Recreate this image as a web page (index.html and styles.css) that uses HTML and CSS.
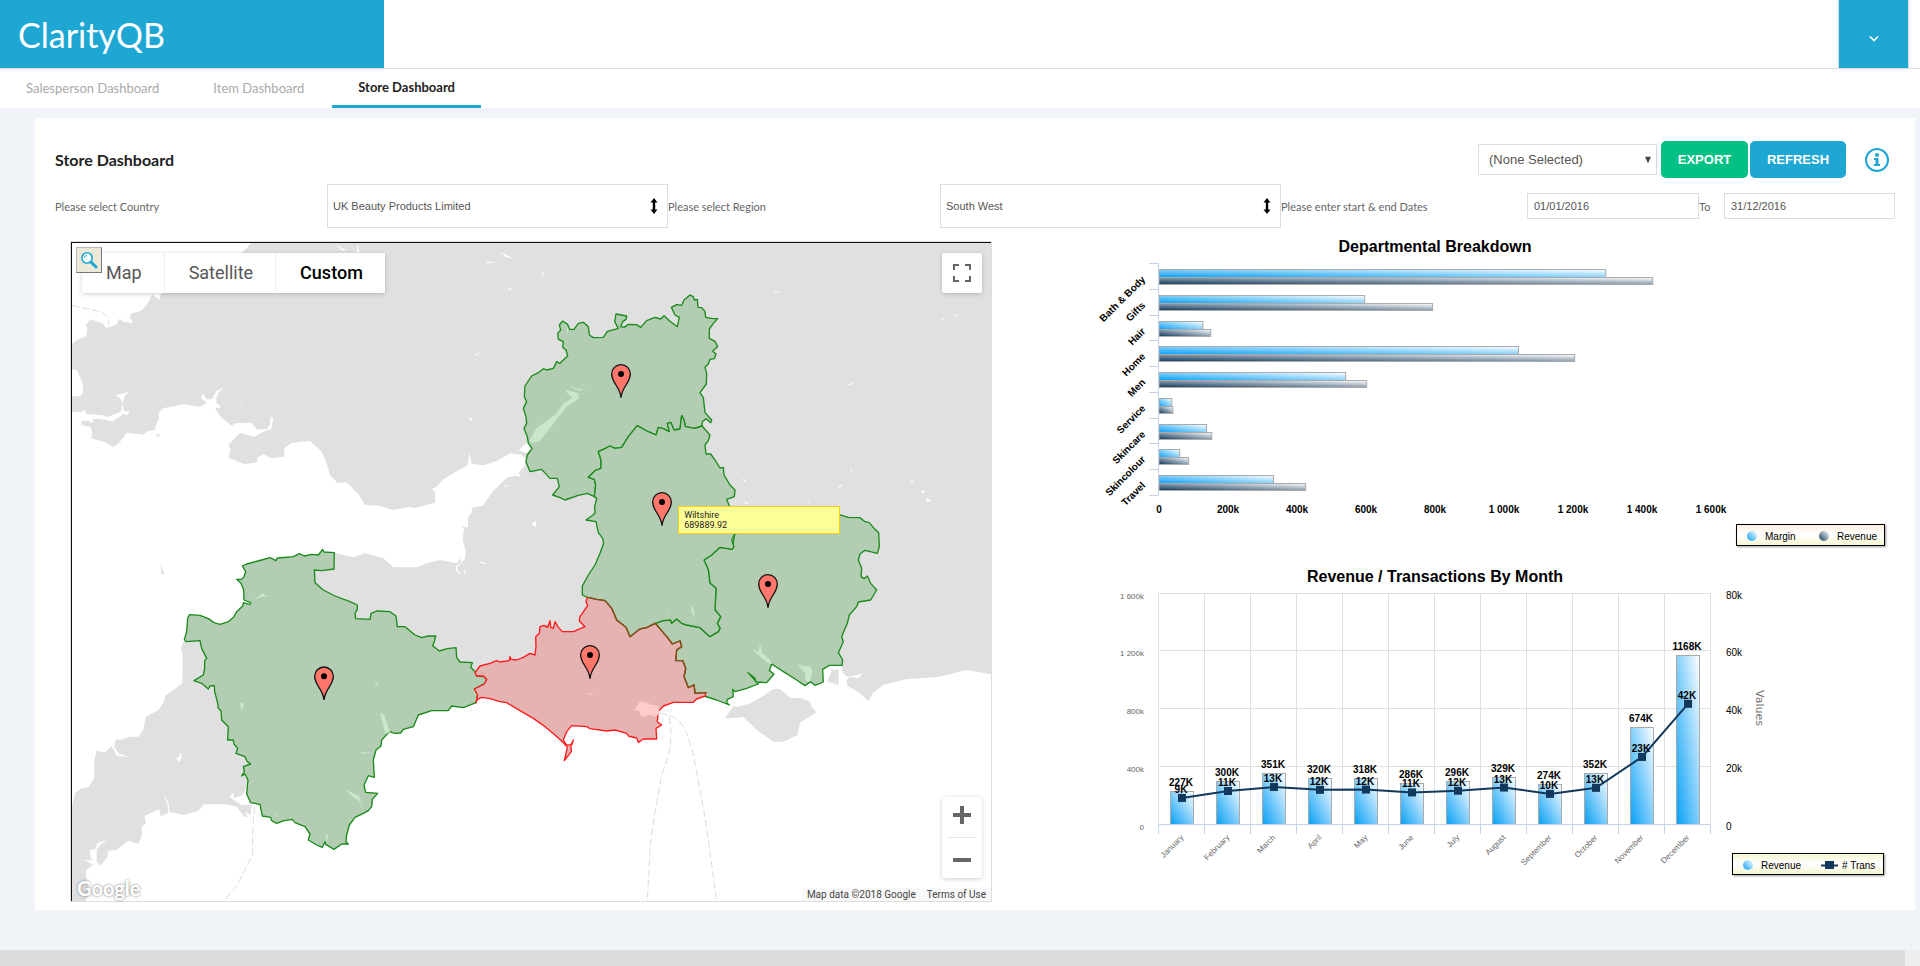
FILE: index.html
```html
<!DOCTYPE html>
<html lang="en">
<head>
    <meta charset="UTF-8">
    <meta name="viewport" content="width=device-width, initial-scale=1.0">
    <title>ClarityQB - Store Dashboard</title>
    <link rel="stylesheet" href="styles.css">
</head>
<body>
    <header class="header">
        <div class="logo">ClarityQB</div>
        <button class="user-menu" type="button" aria-label="User menu">
            <svg width="10" height="8" viewBox="0 0 10 8"><path d="M1 1.5l4 4 4-4" fill="none" stroke="#fff" stroke-width="1.6"/></svg>
        </button>
    </header>
    <nav class="tabs">
        <a href="#" class="tab">Salesperson Dashboard</a>
        <a href="#" class="tab">Item Dashboard</a>
        <a href="#" class="tab active">Store Dashboard</a>
    </nav>

    <main class="panel">
        <div class="panel-head">
            <h1>Store Dashboard</h1>
            <div class="select-box view-select">
                <select aria-label="Saved view"><option>(None Selected)</option></select>
                <svg width="6" height="7" viewBox="0 0 6 7"><path d="M0 0h6L3 7z" fill="#444"/></svg>
            </div>
            <button class="btn export" type="button">EXPORT</button>
            <button class="btn refresh" type="button">REFRESH</button>
            <button class="info" type="button" aria-label="Information">
                <svg width="24" height="24" viewBox="0 0 24 24">
                    <circle cx="12" cy="12" r="11" fill="none" stroke="#1fa7d4" stroke-width="2"/>
                    <circle cx="12" cy="7" r="2" fill="#1fa7d4"/>
                    <path d="M9 10h4.500v6H15v2H9v-2h1.500v-4H9z" fill="#1fa7d4"/>
                </svg>
            </button>
        </div>

        <form class="filters">
            <label for="country">Please select Country</label>
            <div class="select-box">
                <select id="country"><option>UK Beauty Products Limited</option></select>
                <svg width="8" height="16" viewBox="0 0 8 16"><path d="M4 0l3.500 4.500H5.200v7h2.300L4 16 .5 11.500h2.300v-7H.5z"/></svg>
            </div>
            <label for="region">Please select Region</label>
            <div class="select-box">
                <select id="region"><option>South West</option></select>
                <svg width="8" height="16" viewBox="0 0 8 16"><path d="M4 0l3.500 4.500H5.200v7h2.300L4 16 .5 11.500h2.300v-7H.5z"/></svg>
            </div>
            <label for="start">Please enter start &amp; end Dates</label>
            <input id="start" type="text" value="01/01/2016">
            <label for="end">To</label>
            <input id="end" type="text" value="31/12/2016">
        </form>

        <div class="content">
            <section class="map">
                <svg class="map-canvas" viewBox="36 39 2757 1974">
                    <!-- mainland -->
                    <path class="land" d="M571 39L560 55 545 68 400 120 300 195 299 210 276 193 262 222 243 243 213 250 209 262 220 278 190 276 178 266 170 282 138 295 128 280 110 274 92 268 78 285 82 295 79 318 50 330 36 343V418L50 420 60 440 69 465 68 490 62 499 36 499V547L68 545 72 536 80 552 130 556 140 562 183 545 188 520 180 505 152 483 165 495 185 492 215 482 195 495 188 520 192 543 208 544 205 555 190 552 160 574 115 566 98 568 98 580 85 572 64 572 64 584 92 592 97 608 94 625 135 636 160 651 178 638 200 608 250 614 262 604 285 600 289 580 297 568 296 548 310 535 370 523 422 530 440 518 424 505 427 490 440 508 455 508 470 483 493 472 477 485 468 503 470 520 485 532 465 535 480 558 515 588 525 580 575 578 590 598 620 598 630 585 632 562 640 562 634 596 610 605 583 620 540 608 505 645 512 660 505 682 535 695 555 703 590 697 592 683 610 673 635 685 672 680 674 655 690 641 710 637 750 632 785 665 800 700 810 735 832 758 860 757 895 792 915 825 955 827 1000 840 1050 830 1060 835 1125 818V785L1115 778 1130 770 1150 748 1223 705 1228 668 1235 702 1270 706 1310 693 1350 670 1385 674 1397 685 1395 705 1376 730 1383 742 1370 737 1342 742 1300 782 1268 828 1238 832 1234 850 1224 862V893L1202 889 1212 895 1208 930 1218 965 1215 985 1205 1000 1203 985 1190 1000 1140 990 1105 998 1070 1012 1000 1012 970 985 915 970 880 982 823 968 700 1000 700 1200 1000 1300 1300 1350 1800 1330 2290 1300 2345 1308 2348 1330 2362 1340 2380 1338 2408 1330 2396 1344 2370 1340 2360 1350 2362 1367 2400 1390 2425 1413 2440 1388 2470 1365 2540 1347 2630 1342 2680 1330 2720 1320 2795 1333V39z"/>
                    <!-- cornwall -->
                    <path class="land" transform="translate(0 930)" d="M371 303L362 325 368 345 367 430 315 468 312 485 295 510 257 530 250 570 235 590 210 590 180 600 168 597 163 620 175 640 208 652 170 648 155 618 135 637 110 632 103 660 103 715 85 742 65 745 45 760 36 800V1083H75L90 1060 78 1010 78 990 100 975 70 958 95 962 88 930 105 928 112 910 142 900 120 915 110 930 110 965 122 978 142 950 145 932 170 930 205 902 235 912 246 885 245 860 258 850 253 828 298 808 302 828 325 820 322 790 310 768 325 785 328 815 370 825 415 812 432 793 500 793 530 800 552 830 562 830 555 815 572 825 575 795 545 795 508 770 520 758 522 775 548 765 560 740 600 650 440 303z"/>
                    <!-- isle of wight, lundy, small islands -->
                    <path class="land" d="M1995 1465L2020 1428 2035 1430 2070 1420 2110 1398 2140 1377H2160L2190 1403 2225 1405 2250 1415 2256 1432 2270 1447 2220 1478 2213 1515 2170 1535H2140L2090 1500 2050 1460 2040 1463z"/>
                    <path class="land" d="M303 1000l5 20 6 13h-11zM285 612l16 2-6 8zM2302 1355l14-36h20v46z"/>
                    <!-- lakes and rivers -->
                    <path class="water" d="M1376 660L1392 645 1405 636 1415 655 1400 670zM1227 562l11 5-6 7zM1415 882l15-12-4 22zM825 45l33 15-8 3zM892 42l6 26-8-3zM1278 95l38 1-36 4zM1318 66l40 20-20-6zM1340 170l22 12-14-2zM1238 378l24-12-10 8zM540 522l13-12-8 10zM1330 772l18-10-8 8zM1253 993l30 7-14 1z"/>
                    <path class="water" d="M1320 66l40 20-20-4zM1445 118l6 14-4 6zM2138 188l28-6-20 8zM2640 268l18-8-8 8zM2678 260l20-12-10 10zM2360 466l24-12-14 12zM2370 712l8 20-6-8zM2048 744l16 14-12-5zM2334 770l18-8-14 12zM2550 752l12 2-6 6zM2584 778l12 8-8 4zM2598 806l16 4-12 8zM2050 814l18 6-10 2zM2240 822l12-12-8 12z"/>
                    <path class="water" d="M348 1585l10-4 6-18v22l-6 12z"/>
                    <path class="river" d="M1202 1000l-12 10v12l12 10M1212 1022l4 8"/>
                    <!-- ferry routes -->
                    <path class="ferry" d="M36 226L120 245Q150 255 146 285M584 1730L578 1800 577 1875 530 1968 492 2013M1828 1460C1840 1530 1830 1570 1805 1635 1790 1720 1775 1800 1770 1860L1762 2013M1800 1450C1880 1460 1880 1520 1897 1560L1935 1760 1970 2013"/>
                    <!-- devon -->
                    <path class="region" transform="translate(0 930)" d="M823 38L792 36 788 28 775 45 755 43 733 48 718 41 700 50 652 54 648 62 630 53 605 60 560 72 547 78 557 95 552 110 545 118 530 118 543 130 551 150 552 180 572 188 570 194 550 188 548 198 530 215 522 230 505 245 480 253 462 248 445 236 420 226 388 224 383 235 380 275 373 298 378 305 420 302 425 325 440 355 434 362 434 385 430 405 402 422 425 430 445 447 450 438 463 437 464 455 472 485 475 505 483 512 485 540 505 560 503 600 520 600 522 612 533 625 528 640 555 650 562 665 572 672 550 680 553 695 545 708 555 702 564 720 560 762 572 788 600 793 607 828 632 832 635 842 650 850 672 842 697 838 705 848 735 860 750 882 745 900 770 915 787 922 795 905 798 914 822 928 845 912 865 912 858 905 860 885 868 855 885 832 910 820 925 812 935 800 937 778 953 760 917 757 912 735 925 707 943 712 940 660 948 630 963 618 965 600 988 575 1005 580 1022 579 1030 568 1060 560 1075 525 1115 512 1165 512 1175 498 1210 503 1248 488 1253 465 1243 447 1275 430 1280 418 1272 410 1250 408 1245 395 1232 382 1237 368 1200 366 1190 352 1188 323 1162 326 1138 333 1118 317 1123 305 1127 288 1105 288 1085 293 1065 285 1035 260 1012 260 1008 228 990 215 950 213 933 220 930 238 887 236 885 220 892 208 892 195 870 185 825 168 790 150 765 128 763 90 785 92 822 87z"/>
                    <!-- gloucestershire -->
                    <path class="region" transform="translate(1320 0)" d="M570 195L580 200 583 210 592 208 594 232 605 233 615 245 617 262 640 266 653 266 640 280 628 297 628 325 645 334 653 350 638 363 648 372 643 386 630 388 625 402 615 412 620 430 619 462 600 488 610 503 615 548 635 570 632 578 618 566 607 575 606 588 585 595 556 590 552 570 545 557 540 597 522 600 512 577 502 580 508 605 490 596 475 592 468 615 452 608 440 603 412 587 385 620 365 652 345 655 330 648 310 658 295 665 303 690 303 715 285 722 265 742 283 748 287 765 283 800 262 790 235 796 195 810 180 803 158 795 178 770 172 745 150 745 125 718 90 725 78 695 82 675 96 655 85 640 82 620 72 595 80 580 78 560 70 535 80 515 73 500 75 468 95 438 115 428 130 416 140 420 160 415 170 395 180 400 190 390 203 378 198 360 188 352 190 335 175 328 173 310 182 300 178 285 188 273 203 283 208 298 222 298 235 280 250 277 265 290 268 315 280 323 310 322 322 304 345 298 355 295 344 275 348 252 380 258 378 268 368 275 362 290 372 292 385 283 410 284 422 292 440 272 465 262 482 267 492 257 510 274 532 290 538 262 525 255 514 232 530 224 545 226 552 210z"/>
                    <!-- hampshire -->
                    <path class="region" transform="translate(1320 0)" d="M704 912L850 870 1017 854 1045 862 1080 863 1095 875 1108 878 1122 895 1136 908 1138 950 1132 970 1095 961 1080 972 1075 990 1085 1015 1083 1040 1092 1046 1102 1038 1112 1060 1130 1080 1112 1110 1075 1116 1070 1130 1048 1155 1042 1180 1025 1220 1030 1235 1015 1268 1028 1290 1026 1306 988 1306 968 1318 970 1356 945 1366 932 1355 915 1367 890 1350 850 1325 815 1302 808 1322 822 1332 800 1358 768 1356 765 1345 744 1328 775 1362 740 1375 705 1385 698 1378 700 1400 682 1408 680 1418 688 1425 650 1410 612 1398 618 1388 585 1390 582 1365 565 1373 552 1340 557 1315 548 1292 527 1292 530 1260 545 1250 540 1233 517 1242 500 1220 466 1180 490 1172 512 1170 515 1180 530 1167 545 1180 560 1185 600 1193 630 1220 655 1205 660 1195 652 1180 662 1160 645 1140 648 1075 630 1060 625 1020 612 990 635 975 660 952 697 958z"/>
                    <!-- wiltshire -->
                    <path class="region" transform="translate(1320 0)" d="M412 587L440 603 452 608 468 615 475 592 490 596 508 605 502 580 512 577 522 600 540 597 545 557 552 570 556 590 585 595 606 588 630 615 625 632 615 645 618 672 632 672 645 690 660 714 670 712 672 735 690 765 705 780 703 800 680 808 688 828 704 912 695 930 702 950 697 958 660 952 635 975 612 990 625 1020 630 1060 648 1075 645 1140 662 1160 652 1180 660 1195 655 1205 630 1220 600 1193 560 1185 545 1180 530 1167 515 1180 512 1170 490 1172 466 1180 440 1193 420 1197 390 1220 378 1192 350 1170 335 1135 315 1112 290 1108 262 1102 247 1095 247 1068 265 1035 285 1005 300 970 311 940 308 925 295 908 288 875 258 870 275 858 285 850 284 830 290 805 283 800 287 765 283 748 265 742 285 722 303 715 303 690 295 665 310 658 330 648 345 655 365 652 385 620z"/>
                    <!-- dorset -->
                    <path class="region selected" transform="translate(1320 930)" d="M-72 488L-68 478 -55 472 -30 476 0 485 20 488 60 512 100 535 130 556 165 585 190 608 202 622 193 662 214 635 213 615 220 600 216 614 200 615 190 600 200 575 215 557 260 560 270 566 320 573 345 570 380 580 385 588 410 594 415 607 430 597 470 597 468 565 485 555 472 545 475 515 490 498 520 487 580 487 590 477 615 468 618 458 585 460 582 435 565 443 552 410 557 385 548 362 527 362 530 330 545 320 540 303 517 312 500 290 466 250 440 263 420 267 390 290 378 262 350 240 335 205 315 182 290 178 262 172 258 185 263 197 240 230 238 243 255 260 220 275 187 275 175 262 165 245 160 265 152 262 150 242 143 262 132 256 120 260 118 280 107 290 108 320 105 345 90 340 70 352 50 360 33 358 30 350 28 362 0 366 -10 362 -30 370 -60 378 -75 398 -70 408 -50 408 -40 418 -47 432 -77 447 -67 465z"/>
                    <path class="shared" transform="translate(1320 930)" d="M262 172L290 178 315 182 335 205 350 240 378 262 390 290 420 267 440 263 466 250 500 290 517 312 540 303 545 320 530 330 527 362 548 362 557 385 552 410 565 443 582 435 585 460 618 458"/>
                    <!-- inland water inside the regions -->
                    <path class="region-water" transform="translate(1320 0)" d="M88 632L110 595 170 550 190 520 218 503 198 485 200 480 235 490 237 505 200 530 175 562 120 632 100 640zM210 458l6 10 16 8 14 0 8-6-6-16 4 18-10 10-14-4-14-8zM200 292l6 4-4 16zM572 1122l10 18 2 26-10-22zM500 1144l14-4-12 6zM728 1248l22 6 26 12 4-26 6 30 22 16 8 16-12-2-30-26-18-18zM893 1304l38 6 6 14-8 32-12-4-2-24z"/>
                    <path class="region-water" transform="translate(0 930)" d="M562 230l2-30 14-20 26-16 4-6 6 6 10 4-18 2-28 10-14 22zM540 488l14 4-10 22zM942 440l12-18-2 14zM960 518l12 6 18 52-14 6zM903 637l40 0-38 4zM855 748l22 10 20 10 12 44-12-30-22-14zM565 735l22-26-18 24zM645 828l8-16-4 18zM798 878l6 12-6 18z"/>
                    <path class="selected-water" transform="translate(1320 930)" d="M402 512l18-28 16 4 10 0 4 6 22 2 8 22-12 12-20-6-24 6-6-16-12-4zM258 460l24 2-6 3z"/>
                    <!-- store pins -->
                    <g class="pins">
                        <g transform="translate(1683 503)"><path d="M0 0C-3 -34 -28 -44 -28 -71A28 28 0 0 1 28 -71C28 -44 3 -34 0 0z"/><circle cy="-71" r="9"/></g>
                        <g transform="translate(1806 887)"><path d="M0 0C-3 -34 -28 -44 -28 -71A28 28 0 0 1 28 -71C28 -44 3 -34 0 0z"/><circle cy="-71" r="9"/></g>
                        <g transform="translate(792 1410)"><path d="M0 0C-3 -34 -28 -44 -28 -71A28 28 0 0 1 28 -71C28 -44 3 -34 0 0z"/><circle cy="-71" r="9"/></g>
                        <g transform="translate(2124 1133)"><path d="M0 0C-3 -34 -28 -44 -28 -71A28 28 0 0 1 28 -71C28 -44 3 -34 0 0z"/><circle cy="-71" r="9"/></g>
                        <g transform="translate(1590 1346)"><path d="M0 0C-3 -34 -28 -44 -28 -71A28 28 0 0 1 28 -71C28 -44 3 -34 0 0z"/><circle cy="-71" r="9"/></g>
                    </g>
                </svg>
                <div class="map-types">
                    <button type="button">Map</button>
                    <button type="button">Satellite</button>
                    <button type="button" class="current">Custom</button>
                </div>
                <button class="map-search" type="button" aria-label="Search map">
                    <svg width="18" height="18" viewBox="0 0 18 18">
                        <circle cx="7" cy="7" r="5.200" fill="#fff" stroke="#1fa7d4" stroke-width="1.600"/>
                        <path d="M4.500 7A2.500 2.500 0 0 1 7 4.500" fill="none" stroke="#1fa7d4"/>
                        <path d="M11 11l5 5" stroke="#1fa7d4" stroke-width="3" stroke-linecap="round"/>
                    </svg>
                </button>
                <button class="map-full" type="button" aria-label="Full screen">
                    <svg width="18" height="18" viewBox="0 0 18 18"><path d="M1 6V1h5M12 1h5v5M17 12v5h-5M6 17H1v-5" fill="none" stroke="#666" stroke-width="2"/></svg>
                </button>
                <div class="map-zoom">
                    <button type="button" aria-label="Zoom in"><svg width="18" height="18" viewBox="0 0 18 18"><path d="M0 9h18M9 0v18" stroke="#666" stroke-width="4"/></svg></button>
                    <button type="button" aria-label="Zoom out"><svg width="18" height="18" viewBox="0 0 18 18"><path d="M0 9h18" stroke="#666" stroke-width="4"/></svg></button>
                </div>
                <div class="tooltip">Wiltshire<br>689889.92</div>
                <div class="map-brand">Google</div>
                <div class="map-legal"><span>Map data ©2018 Google</span><a href="#">Terms of Use</a></div>
            </section>

            <section class="charts">
                <svg id="departments" class="chart" viewBox="0 11 815 319">
                    <defs>
                        <linearGradient id="blue" x1="0" y1="1" x2="1" y2="0"><stop offset="0" stop-color="#089ff6"/><stop offset="1" stop-color="#fff"/></linearGradient>
                        <linearGradient id="navy" x1="0" y1="1" x2="1" y2="0"><stop offset="0" stop-color="#12395b"/><stop offset="1" stop-color="#fff"/></linearGradient>
                        <linearGradient id="cream" x1="0" y1="0" x2="0" y2="1"><stop offset="0" stop-color="#fdeedd"/><stop offset=".5" stop-color="#fff"/><stop offset="1" stop-color="#f5f5d0"/></linearGradient>
                        <linearGradient id="lemon" x1="0" y1="0" x2="0" y2="1"><stop offset="0" stop-color="#f5f5cc"/><stop offset=".5" stop-color="#fff"/><stop offset="1" stop-color="#f5f5cc"/></linearGradient>
                    </defs>
                </svg>
                <svg id="months" class="chart" viewBox="0 0 815 330"></svg>
            </section>
        </div>
    </main>
    <div class="scroll-strip"><div class="scroll-thumb"></div></div>

    <script>
        const departments = [
            ['Bath & Body', 1295, 1431],
            ['Gifts', 596, 793],
            ['Hair', 127, 150],
            ['Home', 1042, 1205],
            ['Men', 541, 602],
            ['Service', 37, 40],
            ['Skincare', 138, 153],
            ['Skincolour', 60, 86],
            ['Travel', 332, 425]
        ];
        // month, revenue (k), transactions (k)
        const months = [
            ['January', 227, 9.2], ['February', 300, 11.6], ['March', 351, 13],
            ['April', 320, 12], ['May', 318, 12.1], ['June', 286, 11.1],
            ['July', 296, 11.7], ['August', 329, 12.8], ['September', 274, 10.6],
            ['October', 352, 12.7], ['November', 674, 23.4], ['December', 1168, 41.8]
        ];
        const transLabels = ['9K', '11K', '13K', '12K', '12K', '11K', '12K', '13K', '10K', '13K', '23K', '42K'];

        function add(parent, tag, attrs, text) {
            const el = document.createElementNS('http://www.w3.org/2000/svg', tag);
            for (const key in attrs) el.setAttribute(key, attrs[key]);
            if (text !== undefined) el.textContent = text;
            parent.appendChild(el);
            return el;
        }

        function axisText(k) {
            if (k === 0) return '0';
            return k >= 1000 ? '1 ' + String(k - 1000).padStart(3, '0') + 'k' : k + 'k';
        }

        function drawDepartments() {
            const svg = document.getElementById('departments');
            const left = 79, width = 552, top = 33, height = 232;
            const step = height / departments.length;
            const x = k => left + k * width / 1600;

            add(svg, 'text', { x: 355, y: 22, class: 'chart-title' }, 'Departmental Breakdown');
            departments.forEach(([name, margin, revenue], i) => {
                const y = Math.round(top + i * step);
                add(svg, 'path', { d: `M69 ${y + .5}H79`, class: 'axis' });
                add(svg, 'rect', { x: left, y: y + 6.5, width: x(margin) - left, height: 8, fill: 'url(#blue)', class: 'bar' });
                add(svg, 'rect', { x: left, y: y + 14.5, width: x(revenue) - left, height: 7, fill: 'url(#navy)', class: 'bar' });
                add(svg, 'text', { transform: `translate(66 ${y + 17}) rotate(-45)`, class: 'dept-label' }, name);
            });
            add(svg, 'path', { d: `M69 265.5H78.5V33`, class: 'axis' });
            for (let k = 0; k <= 1600; k += 200) {
                add(svg, 'text', { x: x(k), y: 283, class: 'value-label' }, axisText(k));
            }
            add(svg, 'rect', { x: 656.5, y: 294.5, width: 148, height: 21, fill: 'url(#cream)', class: 'legend' });
            add(svg, 'circle', { cx: 672, cy: 306, r: 5, fill: 'url(#blue)' });
            add(svg, 'text', { x: 685, y: 310, class: 'legend-text' }, 'Margin');
            add(svg, 'circle', { cx: 744, cy: 306, r: 5, fill: 'url(#navy)' });
            add(svg, 'text', { x: 757, y: 310, class: 'legend-text' }, 'Revenue');
        }

        function drawMonths() {
            const svg = document.getElementById('months');
            const left = 78.5, top = 33.5, bottom = 264.5, step = 46;
            const right = left + step * 12;
            const height = bottom - top;

            add(svg, 'text', { x: 355, y: 22, class: 'chart-title' }, 'Revenue / Transactions By Month');
            for (let i = 0; i <= 4; i++) {
                const y = Math.round(bottom - i * height / 4) - .5;
                if (i) add(svg, 'path', { d: `M${left} ${y}H${right}`, class: 'grid' });
                add(svg, 'text', { x: 64, y: y + 5, class: 'small-label end' }, axisText(i * 400));
                add(svg, 'text', { x: 646, y: y + 5, class: 'legend-text' }, axisText(i * 20));
            }
            for (let i = 0; i <= 12; i++) {
                const x = left + i * step;
                add(svg, 'path', { d: `M${x} ${top}V${bottom}`, class: 'grid' });
                add(svg, 'path', { d: `M${x} ${bottom}V274`, class: 'axis' });
            }
            const points = months.map(([name, revenue, trans], i) => {
                const cx = left + i * step + 23.5;
                const h = Math.round(revenue * height / 1600);
                add(svg, 'rect', { x: cx - 11.5, y: bottom - h, width: 23, height: h, fill: 'url(#blue)', class: 'bar' });
                add(svg, 'text', { transform: `translate(${cx + 2} 278) rotate(-45)`, class: 'small-label end' }, name);
                return [cx, bottom - trans * height / 80, bottom - h];
            });
            add(svg, 'path', { d: `M${left} ${bottom}H${right}`, class: 'axis' });
            add(svg, 'polyline', { points: points.map(p => p[0] + ',' + p[1]).join(' '), class: 'trend' });
            points.forEach(([cx, y, barTop], i) => {
                add(svg, 'rect', { x: cx - 4, y: y - 4, width: 8, height: 8, fill: '#12395b' });
                add(svg, 'text', { x: cx - 1, y: barTop - 6, class: 'value-label' }, months[i][1] + 'K');
                add(svg, 'text', { x: cx - 1, y: y - 5, class: 'value-label' }, transLabels[i]);
            });
            add(svg, 'text', { transform: 'translate(676 130) rotate(90)', class: 'axis-title' }, 'Values');
            add(svg, 'rect', { x: 652.5, y: 293.5, width: 151, height: 21, fill: 'url(#lemon)', class: 'legend' });
            add(svg, 'circle', { cx: 668, cy: 305, r: 5, fill: 'url(#blue)' });
            add(svg, 'text', { x: 681, y: 309, class: 'legend-text' }, 'Revenue');
            add(svg, 'path', { d: 'M741 305.5H758', class: 'trend' });
            add(svg, 'rect', { x: 745, y: 301, width: 9, height: 8, fill: '#12395b' });
            add(svg, 'text', { x: 762, y: 309, class: 'legend-text' }, '# Trans');
        }

        drawDepartments();
        drawMonths();
    </script>
</body>
</html>
```

FILE: styles.css
```css
* {
    box-sizing: border-box;
}
body {
    margin: 0;
    min-height: 100vh;
    display: flex;
    flex-direction: column;
    background-color: #f0f3f8;
    font-family: Lato, sans-serif;
    color: #666;
}
button, select, input {
    font-family: "Liberation Sans", Arial, sans-serif;
    margin: 0;
}
button {
    cursor: pointer;
    padding: 0;
    border: 0;
}

/* header */
.header {
    display: flex;
    justify-content: space-between;
    height: 69px;
    background-color: #fff;
    border-bottom: 1px solid #ddd;
}
.logo {
    width: 20%;
    padding-left: 18px;
    background-color: #1fa7d4;
    color: #fff;
    font-size: 34px;
    line-height: 70px;
}
.user-menu {
    width: 71px;
    margin-right: 11px;
    padding-top: 8px;
    background-color: #1fa7d4;
    border: solid #ddd;
    border-width: 0 1px;
}
.tabs {
    display: flex;
    gap: 2px;
    height: 39px;
    background-color: #fff;
}
.tab {
    padding: 0 26px;
    font-size: 13px;
    line-height: 38px;
    color: #aaa;
    text-decoration: none;
}
.tab.active {
    color: #222;
    font-weight: bold;
    line-height: 37px;
    border-bottom: 3px solid #1fa7d4;
}

/* panel */
.panel {
    margin: 10px 5px 0 35px;
    padding: 23px 20px 8px;
    background-color: #fff;
}
.panel-head {
    display: flex;
    align-items: center;
    height: 37px;
    margin-bottom: 6px;
    padding-right: 6px;
}
.panel-head h1 {
    margin: 0 auto 0 0;
    font-size: 16px;
    color: #222;
}
.select-box {
    position: relative;
    height: 44px;
}
.select-box select {
    appearance: none;
    width: 100%;
    height: 100%;
    padding: 0 5px;
    border: 1px solid #ddd;
    border-radius: 0;
    background-color: #fff;
    font-size: 11px;
    color: #555;
}
.select-box svg {
    position: absolute;
    top: 50%;
    right: 10px;
    transform: translateY(-50%);
    pointer-events: none;
}
.view-select {
    width: 179px;
    height: 31px;
    margin-right: 4px;
}
.view-select select {
    padding: 0 10px;
    font-size: 13px;
}
.view-select svg {
    right: 6px;
}
.btn {
    height: 37px;
    border-radius: 5px;
    color: #fff;
    font-size: 13px;
    font-weight: bold;
}
.export {
    width: 87px;
    margin-right: 2px;
    background-color: #03c184;
}
.refresh {
    width: 96px;
    background-color: #1fa7d4;
}
.info {
    height: 24px;
    margin-left: 19px;
    background: none;
}
.filters {
    display: grid;
    grid-template-columns: 272fr 341fr 272fr 341fr 246fr 172fr 25fr 171fr;
    align-items: center;
    margin-bottom: 13px;
}
.filters label {
    font-size: 11px;
    white-space: nowrap;
}
.filters input {
    width: 100%;
    height: 26px;
    padding: 0 6px;
    border: 1px solid #ddd;
    font-size: 11px;
    color: #555;
}
.content {
    display: grid;
    grid-template-columns: 922fr 815fr;
    gap: 88px;
    padding-left: 15px;
}

/* map */
.map {
    position: relative;
    border: 1px solid #ddd;
    font-family: Roboto, sans-serif;
}
.map button {
    font-family: Roboto, sans-serif;
}
.map-canvas {
    display: block;
    width: 100%;
    border: solid #111;
    border-width: 1px 0 0 1px;
    background-color: #fff;
}
.land {
    fill: #e0e0e0;
}
.water {
    fill: #fff;
}
.river {
    fill: none;
    stroke: #fff;
    stroke-width: 4;
}
.ferry {
    fill: none;
    stroke: #ddd;
    stroke-width: 3;
    stroke-dasharray: 22 9;
}
.region {
    fill: #b3cdb3;
    stroke: #1a8a1a;
    stroke-width: 4;
    stroke-linejoin: round;
}
.region.selected {
    fill: #e6b3b3;
    stroke: #ff1a1a;
}
.shared {
    fill: none;
    stroke: #6e5a1a;
    stroke-width: 4;
}
.region-water {
    fill: #cce6cc;
}
.selected-water {
    fill: #ffcccc;
}
.pins path {
    fill: #ff776b;
    stroke: #111;
    stroke-width: 4;
}
.map-types {
    position: absolute;
    top: 11px;
    left: 11px;
    display: flex;
    gap: 1px;
    height: 40px;
    background-color: #eee;
    border-radius: 2px;
    box-shadow: 0 1px 4px rgba(0, 0, 0, .2);
}
.map-types button {
    padding: 0 22px 2px 24px;
    background-color: #fff;
    color: #565656;
    font-size: 18px;
}
.map-types .current {
    color: #000;
    font-weight: 500;
}
.map-search {
    position: absolute;
    top: 5px;
    left: 5px;
    display: flex;
    align-items: center;
    justify-content: center;
    width: 26px;
    height: 26px;
    background-color: #ece9d8;
    border: 1px solid #bbb;
    border-right-color: #777;
    border-bottom-color: #777;
}
.map-full, .map-zoom {
    position: absolute;
    right: 9px;
    width: 40px;
    background-color: #fff;
    border-radius: 2px;
    box-shadow: 0 1px 4px rgba(0, 0, 0, .2);
}
.map-full {
    top: 11px;
    height: 40px;
}
.map-zoom {
    bottom: 23px;
    padding: 0 5px;
}
.map-zoom button {
    display: block;
    width: 30px;
    height: 40px;
    padding-bottom: 4px;
    background: none;
}
.map-zoom button + button {
    height: 41px;
    padding: 4px 0 0;
    border-top: 1px solid #e6e6e6;
}
.map svg {
    vertical-align: middle;
}
.tooltip {
    position: absolute;
    top: 40%;
    left: 66%;
    width: 162px;
    height: 28px;
    padding: 3px 5px;
    background-color: #ff9;
    border: 1px solid #fc0;
    color: #222;
    font-size: 9px;
    line-height: 10px;
}
.map-brand {
    position: absolute;
    left: 6px;
    bottom: 0;
    color: #fff;
    font-family: Lato, sans-serif;
    font-size: 20px;
    font-weight: bold;
    line-height: 26px;
    text-shadow: 0 0 3px #777;
}
.map-legal {
    position: absolute;
    right: 0;
    bottom: 0;
    display: flex;
    gap: 1px;
    font-size: 10px;
    line-height: 13px;
    color: #444;
}
.map-legal span, .map-legal a {
    padding: 0 5px;
    background-color: #f8f8f8;
    color: #444;
    text-decoration: none;
}

/* charts */
.chart {
    display: block;
    width: 100%;
    overflow: visible;
    font-family: "Liberation Sans", Arial, sans-serif;
}
.chart-title {
    font-size: 16px;
    font-weight: bold;
    text-anchor: middle;
}
.axis {
    fill: none;
    stroke: #c5d3ea;
}
.grid {
    fill: none;
    stroke: #e0e0e0;
}
.bar {
    stroke: #aaa;
}
.trend {
    fill: none;
    stroke: #12395b;
    stroke-width: 2;
}
.dept-label {
    font-size: 10px;
    font-weight: bold;
    text-anchor: end;
}
.value-label {
    font-size: 10px;
    font-weight: bold;
    text-anchor: middle;
}
.small-label {
    font-size: 8px;
    fill: #666;
}
.end {
    text-anchor: end;
}
.legend {
    stroke: #000;
    filter: drop-shadow(1px 1px 1px rgba(0, 0, 0, .4));
}
.legend-text {
    font-size: 10px;
}
.axis-title {
    font-family: "DejaVu Sans", sans-serif;
    font-size: 11px;
    fill: #707070;
}

.scroll-strip {
    height: 16px;
    margin-top: auto;
    padding-right: 15px;
    background-color: #eee;
}
.scroll-thumb {
    height: 100%;
    background-color: #ddd;
}
```
